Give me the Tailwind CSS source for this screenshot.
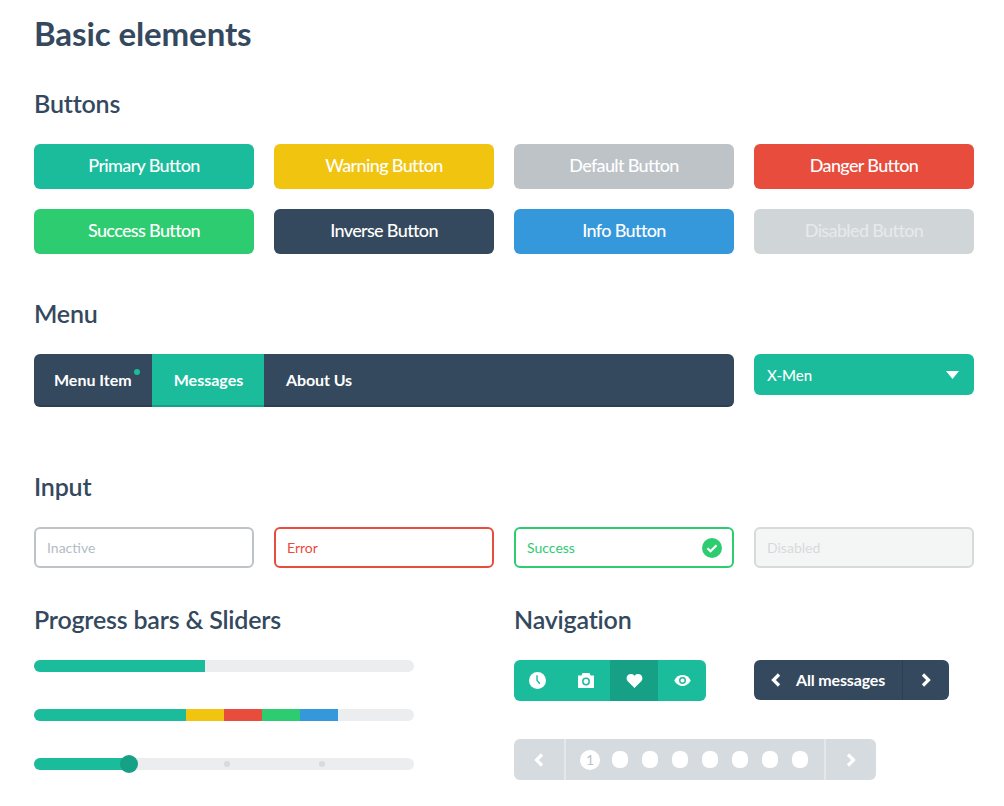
<!DOCTYPE html>
<html lang="en">
<head>
  <meta charset="UTF-8">
  <title>Basic elements</title>
  <script src="https://cdn.jsdelivr.net/npm/@tailwindcss/browser@4"></script>
</head>
<body class="bg-white text-[#34495e] font-['Lato',sans-serif] w-[1004px] h-[806px] overflow-hidden">
  <div class="px-[34px] pt-[14px]">
    <h1 class="text-[33px] leading-[38px] font-bold tracking-[-0.1px]">Basic elements</h1>

    <h2 class="text-[25px] leading-[28px] font-semibold tracking-[-0.2px] mt-[37px]">Buttons</h2>
    <div class="grid grid-cols-4 gap-x-[20px] gap-y-[20px] w-[940px] mt-[27px] text-[18px] leading-[25px] tracking-[-0.65px] text-white font-medium">
      <div class="h-[45px] pb-[2px] rounded-[6px] bg-[#1abc9c] flex items-center justify-center">Primary Button</div>
      <div class="h-[45px] pb-[2px] rounded-[6px] bg-[#f1c40f] flex items-center justify-center">Warning Button</div>
      <div class="h-[45px] pb-[2px] rounded-[6px] bg-[#bdc3c7] flex items-center justify-center">Default Button</div>
      <div class="h-[45px] pb-[2px] rounded-[6px] bg-[#e74c3c] flex items-center justify-center">Danger Button</div>
      <div class="h-[45px] pb-[2px] rounded-[6px] bg-[#2ecc71] flex items-center justify-center">Success Button</div>
      <div class="h-[45px] pb-[2px] rounded-[6px] bg-[#34495e] flex items-center justify-center">Inverse Button</div>
      <div class="h-[45px] pb-[2px] rounded-[6px] bg-[#3498db] flex items-center justify-center">Info Button</div>
      <div class="h-[45px] pb-[2px] rounded-[6px] bg-[#d0d5d8] text-[#e6e9ea] flex items-center justify-center">Disabled Button</div>
    </div>

    <h2 class="text-[25px] leading-[28px] font-semibold tracking-[-0.2px] mt-[45px]">Menu</h2>
    <div class="flex gap-[20px] w-[940px] mt-[27px] items-start">
      <div class="w-[700px] h-[53px] rounded-[6px] bg-[#34495e] border-b-2 border-[#2c3e50] flex text-white text-[16px] font-bold">
        <div class="relative w-[118px] flex items-center pl-[20px]">Menu Item
          <span class="absolute left-[100px] top-[15px] w-[6px] h-[6px] rounded-full bg-[#1abc9c]"></span>
        </div>
        <div class="w-[112px] h-[53px] bg-[#1abc9c] border-b-2 border-[#16a085] flex items-center justify-center pl-[1px]">Messages</div>
        <div class="flex items-center pl-[22px] tracking-[-0.1px]">About Us</div>
      </div>
      <div class="w-[220px] h-[41px] rounded-[6px] bg-[#1abc9c] flex items-center justify-between pl-[13px] pr-[15px] pt-[1px] text-white text-[15px] font-medium">
        X-Men
        <svg width="13" height="8" viewBox="0 0 13 8"><path d="M0 0h13L6.500 8z" fill="#fff"/></svg>
      </div>
    </div>

    <h2 class="text-[25px] leading-[28px] font-semibold tracking-[-0.2px] mt-[65px]">Input</h2>
    <div class="grid grid-cols-4 gap-x-[20px] w-[940px] mt-[27px] text-[14px]">
      <div class="h-[41px] rounded-[6px] border-2 border-[#bdc3c7] flex items-center pl-[11px] text-[#b2bcc5]">Inactive</div>
      <div class="h-[41px] rounded-[6px] border-2 border-[#e74c3c] flex items-center pl-[11px] text-[#e74c3c]">Error</div>
      <div class="h-[41px] rounded-[6px] border-2 border-[#2ecc71] flex items-center justify-between pl-[11px] pr-[10px] text-[#2ecc71]">Success
        <svg width="20" height="20" viewBox="0 0 20 20"><circle cx="10" cy="10" r="10" fill="#2ecc71"/><path d="M5.500 10.200l3 3 6-6" fill="none" stroke="#fff" stroke-width="2.200"/></svg>
      </div>
      <div class="h-[41px] rounded-[6px] border-2 border-[#d5dbdb] bg-[#f4f6f6] flex items-center pl-[11px] text-[#d5dbdb]">Disabled</div>
    </div>

    <div class="flex mt-[37px] w-[940px]">
      <div class="w-[480px]">
        <h2 class="text-[25px] leading-[28px] font-semibold tracking-[-0.2px]">Progress bars &amp; Sliders</h2>
        <div class="w-[380px] h-[12px] rounded-full bg-[#ebedef] mt-[27px] overflow-hidden flex">
          <div class="w-[171px] bg-[#1abc9c]"></div>
        </div>
        <div class="w-[380px] h-[12px] rounded-full bg-[#ebedef] mt-[37px] overflow-hidden flex">
          <div class="w-[152px] bg-[#1abc9c]"></div>
          <div class="w-[38px] bg-[#f1c40f]"></div>
          <div class="w-[38px] bg-[#e74c3c]"></div>
          <div class="w-[38px] bg-[#2ecc71]"></div>
          <div class="w-[38px] bg-[#3498db]"></div>
        </div>
        <div class="relative w-[380px] h-[12px] rounded-full bg-[#ebedef] mt-[37px]">
          <div class="w-[95px] h-full rounded-l-full bg-[#1abc9c]"></div>
          <span class="absolute left-[190px] top-[3px] w-[6px] h-[6px] rounded-full bg-[#d5dbe0]"></span>
          <span class="absolute left-[285px] top-[3px] w-[6px] h-[6px] rounded-full bg-[#d5dbe0]"></span>
          <span class="absolute left-[86px] top-[-3px] w-[18px] h-[18px] rounded-full bg-[#16a085]"></span>
        </div>
      </div>
      <div class="w-[460px]">
        <h2 class="text-[25px] leading-[28px] font-semibold tracking-[-0.2px]">Navigation</h2>
        <div class="flex gap-[48px] mt-[27px] items-start">
          <div class="w-[192px] h-[41px] rounded-[6px] bg-[#1abc9c] flex overflow-hidden">
            <div class="w-[48px] pr-[1px] flex items-center justify-center">
              <svg width="17" height="17" viewBox="0 0 18 18"><circle cx="9" cy="9" r="9" fill="#fff"/><path d="M8.500 3.500V9l3 3.500" fill="none" stroke="#1abc9c" stroke-width="1.500"/></svg>
            </div>
            <div class="w-[48px] flex items-center justify-center">
              <svg width="16" height="15" viewBox="0 0 16 15"><path d="M0 2.500h3.500l1-2.500h7l1 2.500H16V15H0z" fill="#fff"/><circle cx="8" cy="8.500" r="3.200" fill="none" stroke="#1abc9c" stroke-width="1.500"/></svg>
            </div>
            <div class="w-[48px] bg-[#16a085] flex items-center justify-center">
              <svg width="17" height="15" viewBox="0 0 18 16"><path d="M9 16L1.500 8.500A4.700 4.700 0 0 1 9 2.800a4.700 4.700 0 0 1 7.500 5.700z" fill="#fff"/></svg>
            </div>
            <div class="w-[48px] flex items-center justify-center">
              <svg width="17" height="11" viewBox="0 0 18 12"><path d="M0 6c2-4 5.500-6 9-6s7 2 9 6c-2 4-5.500 6-9 6s-7-2-9-6z" fill="#fff"/><circle cx="9" cy="6" r="3" fill="none" stroke="#1abc9c" stroke-width="1.600"/></svg>
            </div>
          </div>
          <div class="w-[195px] h-[40px] rounded-[6px] bg-[#34495e] flex text-white text-[16px] font-bold tracking-[-0.15px]">
            <div class="w-[148px] flex items-center pl-[17px] gap-[15px]">
              <svg width="10" height="14" viewBox="0 0 10 14"><path d="M8 1.500L2.500 7 8 12.500" fill="none" stroke="#fff" stroke-width="3.200"/></svg>
              All messages
            </div>
            <div class="flex-1 border-l border-[#2c3e50] flex items-center justify-center">
              <svg width="10" height="14" viewBox="0 0 10 14"><path d="M2 1.500L7.500 7 2 12.500" fill="none" stroke="#fff" stroke-width="3.200"/></svg>
            </div>
          </div>
        </div>
        <div class="w-[362px] h-[41px] rounded-[6px] bg-[#d5dbdf] flex mt-[38px]">
          <div class="w-[52px] border-r-2 border-[#e4e8ea] flex items-center justify-center">
            <svg width="10" height="14" viewBox="0 0 10 14"><path d="M8 1.500L2.500 7 8 12.500" fill="none" stroke="#fff" stroke-width="3.200"/></svg>
          </div>
          <div class="w-[258px] flex items-center pl-[14px]">
            <span class="w-[20px] h-[20px] rounded-full bg-white flex items-center justify-center text-[14px] text-[#bdc3c7]">1</span>
            <div class="flex gap-[14px] ml-[12px]">
              <span class="w-[16px] h-[17px] rounded-[7px] bg-white"></span>
              <span class="w-[16px] h-[17px] rounded-[7px] bg-white"></span>
              <span class="w-[16px] h-[17px] rounded-[7px] bg-white"></span>
              <span class="w-[16px] h-[17px] rounded-[7px] bg-white"></span>
              <span class="w-[16px] h-[17px] rounded-[7px] bg-white"></span>
              <span class="w-[16px] h-[17px] rounded-[7px] bg-white"></span>
              <span class="w-[16px] h-[17px] rounded-[7px] bg-white"></span>
            </div>
          </div>
          <div class="flex-1 border-l-2 border-[#e4e8ea] flex items-center justify-center">
            <svg width="10" height="14" viewBox="0 0 10 14"><path d="M2 1.500L7.500 7 2 12.500" fill="none" stroke="#fff" stroke-width="3.200"/></svg>
          </div>
        </div>
      </div>
    </div>
  </div>
</body>
</html>
